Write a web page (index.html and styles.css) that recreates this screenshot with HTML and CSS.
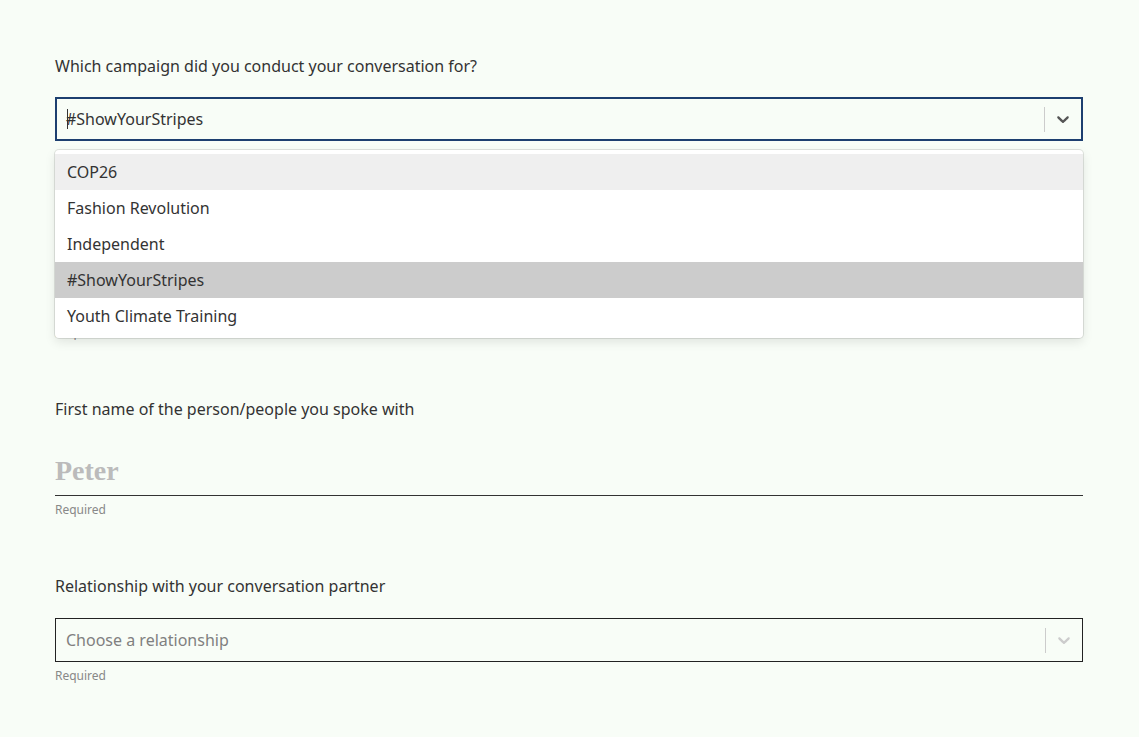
FILE: index.html
```html
<!DOCTYPE html>
<html lang="en">
<head>
    <meta charset="UTF-8">
    <title>Conversation form</title>
    <link rel="stylesheet" href="styles.css">
</head>
<body>
    <form class="form">
        <div class="field first">
            <label class="label">Which campaign did you conduct your conversation for?</label>
            <div class="select-wrap">
                <div class="select is-focused">
                    <div class="select-value"><span class="caret"></span>#ShowYourStripes</div>
                    <span class="separator"></span>
                    <span class="indicator">
                        <svg viewBox="0 0 20 20" width="20" height="20"><path d="M4.516 7.548c0.436-0.446 1.043-0.481 1.576 0l3.908 3.747 3.908-3.747c0.533-0.481 1.141-0.446 1.574 0 0.436 0.445 0.408 1.197 0 1.615-0.406 0.418-4.695 4.502-4.695 4.502-0.217 0.223-0.502 0.335-0.787 0.335s-0.57-0.112-0.789-0.335c0 0-4.287-4.084-4.695-4.502s-0.436-1.17 0-1.615z"/></svg>
                    </span>
                </div>
                <ul class="menu">
                    <li class="option is-focused">COP26</li>
                    <li class="option">Fashion Revolution</li>
                    <li class="option">Independent</li>
                    <li class="option is-selected">#ShowYourStripes</li>
                    <li class="option">Youth Climate Training</li>
                </ul>
            </div>
        </div>

        <!-- field hidden behind the open menu, only its hint peeks out -->
        <div class="field">
            <div class="covered"></div>
            <p class="hint">Required</p>
        </div>

        <div class="field">
            <label class="label">First name of the person/people you spoke with</label>
            <input class="text-input" type="text" placeholder="Peter">
            <p class="hint">Required</p>
        </div>

        <div class="field">
            <label class="label wide">Relationship with your conversation partner</label>
            <div class="select">
                <div class="select-value placeholder">Choose a relationship</div>
                <span class="separator"></span>
                <span class="indicator muted">
                    <svg viewBox="0 0 20 20" width="20" height="20"><path d="M4.516 7.548c0.436-0.446 1.043-0.481 1.576 0l3.908 3.747 3.908-3.747c0.533-0.481 1.141-0.446 1.574 0 0.436 0.445 0.408 1.197 0 1.615-0.406 0.418-4.695 4.502-4.695 4.502-0.217 0.223-0.502 0.335-0.787 0.335s-0.57-0.112-0.789-0.335c0 0-4.287-4.084-4.695-4.502s-0.436-1.17 0-1.615z"/></svg>
                </span>
            </div>
            <p class="hint">Required</p>
        </div>
    </form>
</body>
</html>
```

FILE: styles.css
```css
* {
    margin: 0;
    padding: 0;
    box-sizing: border-box;
}
body {
    background: #f8fdf7;
    font-family: "Noto Sans", Arial, sans-serif;
    color: #333;
}
.form {
    width: 1028px;
    margin-left: 55px;
    padding-top: 54px;
}
.field {
    margin-bottom: 56px;
}
.field.first {
    margin-bottom: 0;
}
.covered {
    height: 178px;
}
.label {
    display: block;
    font-size: 16px;
    line-height: 24px;
    margin-bottom: 19px;
    color: #333;
}
.label.wide {
    margin-bottom: 20px;
}
.hint {
    font-size: 12px;
    line-height: 16px;
    margin-top: 6px;
    color: #888;
}
.select-wrap {
    position: relative;
}
.select {
    display: flex;
    align-items: center;
    height: 44px;
    border: 1px solid #222;
    background: #f8fdf7;
}
.select.is-focused {
    border: 2px solid #1d3f70;
}
.select-value {
    flex: 1;
    position: relative;
    padding-left: 10px;
    font-size: 16px;
    line-height: 20px;
    color: #333;
}
.select.is-focused .select-value {
    padding-left: 9px;
}
.select-value.placeholder {
    color: #808080;
}
.caret {
    position: absolute;
    left: 10px;
    top: 0;
    width: 1px;
    height: 20px;
    background: #333;
}
.separator {
    width: 1px;
    height: 25px;
    background: #ccc;
}
.indicator {
    display: flex;
    padding: 8px;
    fill: #555;
}
.indicator.muted {
    fill: #ccc;
}
.menu {
    position: absolute;
    top: calc(100% + 9px);
    left: 0;
    right: 0;
    z-index: 2;
    list-style: none;
    background: #fff;
    border-radius: 4px;
    padding: 4px 0;
    box-shadow: 0 0 0 1px rgba(0, 0, 0, 0.1), 0 4px 11px rgba(0, 0, 0, 0.1);
}
.option {
    padding: 8px 12px;
    font-size: 16px;
    line-height: 20px;
    color: #333;
}
.option.is-focused {
    background: #efefef;
}
.option.is-selected {
    background: #ccc;
}
.text-input {
    display: block;
    width: 100%;
    height: 50px;
    margin-top: 25px;
    border: none;
    border-bottom: 1px solid #333;
    background: transparent;
    font-family: "Liberation Serif", "DejaVu Serif", serif;
    font-weight: bold;
    font-size: 28px;
    color: #333;
    outline: none;
}
.text-input::placeholder {
    color: #bbb;
}
```
